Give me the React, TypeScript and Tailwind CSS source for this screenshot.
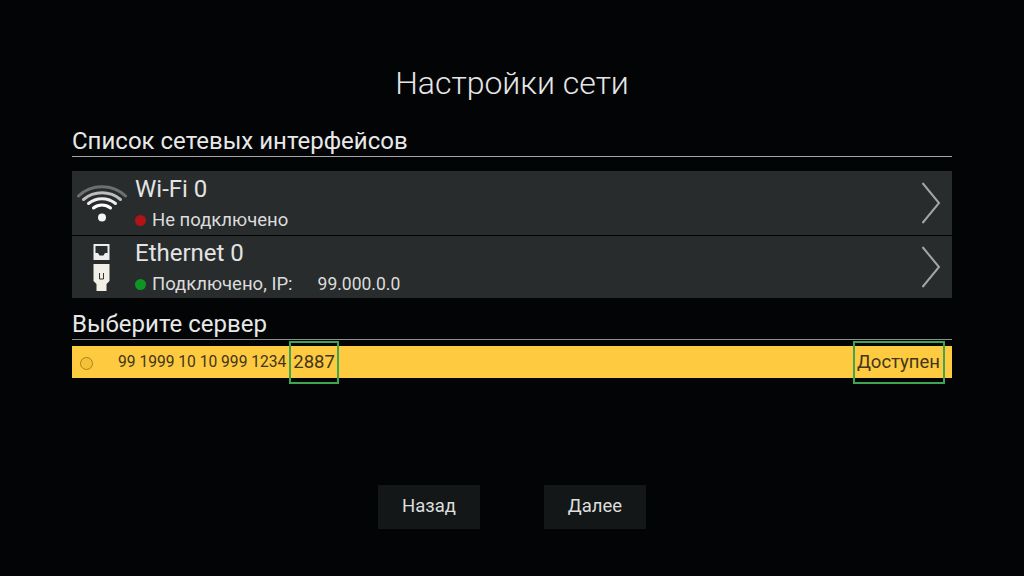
const FONT = "font-['Roboto',sans-serif]";

function WifiIcon() {
  return (
    <svg width="50" height="40" viewBox="0 0 50 40" fill="none" strokeLinecap="round">
      <path d="M1.500 13C14 0.500 36 0.500 48.500 13" stroke="#6f6f6f" strokeWidth="3" />
      <path d="M6.500 16.500C17 7.500 33 7.500 43.500 16.500" stroke="#bdbdbd" strokeWidth="3" />
      <path d="M11.500 20.500C19 14 31 14 38.500 20.500" stroke="#eeeeee" strokeWidth="3" />
      <path d="M16.500 25C21.500 21 28.500 21 33.500 25" stroke="#ffffff" strokeWidth="3" />
      <circle cx="25" cy="34.500" r="4" fill="#f4f4f4" />
    </svg>
  );
}

function EthernetIcon() {
  return (
    <svg width="20" height="50" viewBox="0 0 20 50" fill="none">
      <rect x="1.500" y="2" width="16" height="16" fill="#eeeeee" />
      <path d="M3.500 4H15.500V11H13L11.500 13.500H7.500L6 11H3.500Z" fill="#2a2d2e" />
      <path d="M1.500 22H17.500V39L14.500 42V49H4.500V42L1.500 39Z" fill="#f2f0e6" />
      <path d="M7.500 31V37H11.500V31" stroke="#333333" strokeWidth="1" />
    </svg>
  );
}

function ChevronIcon() {
  return (
    <svg width="20" height="42" viewBox="0 0 20 42" fill="none" className="mr-[11px] shrink-0">
      <path d="M1.500 1L18 21L1.500 41" stroke="#a3a5a5" strokeWidth="2" />
    </svg>
  );
}

function InterfaceRow({
  icon,
  name,
  dot,
  status,
  ip,
  heightClass,
}: {
  icon: JSX.Element;
  name: string;
  dot: string;
  status: string;
  ip?: string;
  heightClass: string;
}) {
  return (
    <div className={`flex items-center bg-[#282c2d] ${heightClass}`}>
      <div className="flex w-[59px] shrink-0 justify-center">{icon}</div>
      <div className="ml-[4px] min-w-0 flex-1">
        <div className="text-[24px] leading-[26px] text-[#e4e4e4]">{name}</div>
        <div className="mt-[8px] flex items-center text-[18.500px] leading-[20px] text-[#dcdcdc]">
          <span className={`mr-[6px] size-[11px] rounded-full ${dot}`} />
          <span>{status}</span>
          {ip ? <span className="ml-[25px] text-[17.500px]">{ip}</span> : null}
        </div>
      </div>
      <ChevronIcon />
    </div>
  );
}

export default function App() {
  return (
    <div className={`flex h-[576px] w-[1024px] flex-col overflow-hidden bg-[#020405] px-[72px] ${FONT}`}>
      <h1 className="mt-[64px] text-center text-[32px] font-light leading-[38px] text-[#e6e6e6]">Настройки сети</h1>

      <h2 className="mt-[26px] border-b border-[#a8a8a8] pb-[1px] text-[24px] leading-[27px] text-[#e8e8e8]">
        Список сетевых интерфейсов
      </h2>

      <div className="mt-[14px] flex flex-col gap-[1px]">
        <InterfaceRow
          icon={<WifiIcon />}
          name="Wi-Fi 0"
          dot="bg-[#b01418]"
          status="Не подключено"
          heightClass="h-[64px]"
        />
        <InterfaceRow
          icon={<EthernetIcon />}
          name="Ethernet 0"
          dot="bg-[#0f9426]"
          status="Подключено, IP:"
          ip="99.000.0.0"
          heightClass="h-[62px]"
        />
      </div>

      <h2 className="mt-[13px] border-b border-[#8f8f8f] pb-[1px] text-[24px] leading-[27px] text-[#e8e8e8]">
        Выберите сервер
      </h2>

      <div className="relative mt-[6px] flex h-[32px] shrink-0 items-center bg-[#fdca40] pt-[2px] text-[#43351a]">
        <span className="ml-[8px] size-[13px] rounded-full border border-[#a8841e] bg-[#f6c235]" />
        <span className="ml-[25px] text-[15.600px]">99 1999 10 10 999 1234</span>
        <span className="relative ml-[7px] text-[18.500px]">
          2887
          <span className="absolute -left-[4px] -right-[4px] -top-[8px] -bottom-[7px] border-[2px] border-[#3fa552]" />
        </span>
        <span className="relative ml-auto mr-[12px] text-[18.500px]">
          Доступен
          <span className="absolute -left-[4px] -right-[5px] -top-[8px] -bottom-[7px] border-[2px] border-[#3fa552]" />
        </span>
      </div>

      <div className="mt-[107px] flex justify-center gap-[64px]">
        <button type="button" className="h-[44px] w-[102px] bg-[#131718] text-[18.500px] text-[#dedede]">
          Назад
        </button>
        <button type="button" className="h-[44px] w-[102px] bg-[#131718] text-[18.500px] text-[#dedede]">
          Далее
        </button>
      </div>
    </div>
  );
}
